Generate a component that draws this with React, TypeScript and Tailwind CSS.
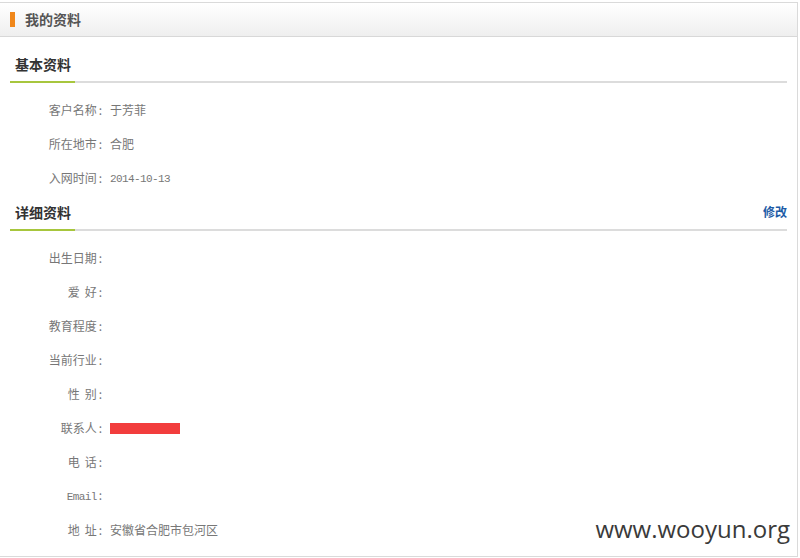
const cjk = '"Noto Sans CJK SC", "Noto Sans", sans-serif';

type Row = { label: string[]; value?: string; mono?: boolean; monoLabel?: boolean; redacted?: boolean };

const basicRows: Row[] = [
  { label: ['客户名称'], value: '于芳菲' },
  { label: ['所在地市'], value: '合肥' },
  { label: ['入网时间'], value: '2014-10-13', mono: true },
];

const detailRows: Row[] = [
  { label: ['出生日期'] },
  { label: ['爱', '好'] },
  { label: ['教育程度'] },
  { label: ['当前行业'] },
  { label: ['性', '别'] },
  { label: ['联系人'], redacted: true },
  { label: ['电', '话'] },
  { label: ['Email'], monoLabel: true },
  { label: ['地', '址'], value: '安徽省合肥市包河区' },
];

function SectionHeading({ title, action }: { title: string; action?: string }) {
  return (
    <div className="pt-[7px]">
      <div className="flex items-center justify-between h-[20px] pl-[5px]">
        <h2 className="text-[14px] font-bold text-[#333] leading-[20px]">{title}</h2>
        {action && <a className="text-[12px] font-bold text-[#1c5ba6] leading-[20px]">{action}</a>}
      </div>
      <div className="mt-[7px] h-[2px] bg-[#dcdcdc]">
        <div className="h-[2px] w-[65px] bg-[#a7c63d]" />
      </div>
    </div>
  );
}

function InfoRow({ row }: { row: Row }) {
  return (
    <div className="flex items-center h-[34px] text-[12px] text-[#777]">
      <div className="w-[92px] text-right leading-[16px]">
        {row.monoLabel ? (
          <span className="text-[11px] tracking-[-0.6px]" style={{ fontFamily: '"Liberation Mono", monospace' }}>
            {row.label[0]}
          </span>
        ) : (
          row.label.map((ch, i) => (
            <span key={i} className={i < row.label.length - 1 ? 'mr-[5px]' : ''}>
              {ch}
            </span>
          ))
        )}
        <span className="ml-[2px]">:</span>
      </div>
      <div className="ml-[8px] leading-[16px]">
        {row.redacted && <div className="w-[70px] h-[11px] bg-[#f23d3d]" />}
        {row.value &&
          (row.mono ? (
            <span className="text-[11px] tracking-[-0.6px]" style={{ fontFamily: '"Liberation Mono", monospace' }}>
              {row.value}
            </span>
          ) : (
            <span>{row.value}</span>
          ))}
      </div>
    </div>
  );
}

export default function App() {
  return (
    <div className="w-[800px] h-[558px] bg-white pt-[2px]" style={{ fontFamily: cjk }}>
      <div className="relative w-[798px] h-[555px] border-t border-r border-b border-[#dadada]">
        {/* header */}
        <div className="flex items-center h-[34px] pl-[10px] border-b border-[#d8d8d8] bg-gradient-to-b from-white to-[#efefef]">
          <span className="w-[5px] h-[15px] bg-[#f0871a]" />
          <span className="ml-[10px] text-[14px] font-bold text-[#555]">我的资料</span>
        </div>

        <div className="pl-[10px] pr-[10px]">
          <div className="pt-[10px]">
            <SectionHeading title="基本资料" />
          </div>
          <div className="pt-[10px]">
            {basicRows.map((r, i) => (
              <InfoRow key={i} row={r} />
            ))}
          </div>

          <SectionHeading title="详细资料" action="修改" />
          <div className="pt-[10px]">
            {detailRows.map((r, i) => (
              <InfoRow key={i} row={r} />
            ))}
          </div>
        </div>

        {/* watermark */}
        <div
          className="absolute right-[7px] bottom-[15px] text-[24px] text-[#3a3a3a] leading-none"
          style={{ fontFamily: '"Open Sans", sans-serif' }}
        >
          www.wooyun.org
        </div>
      </div>
    </div>
  );
}
